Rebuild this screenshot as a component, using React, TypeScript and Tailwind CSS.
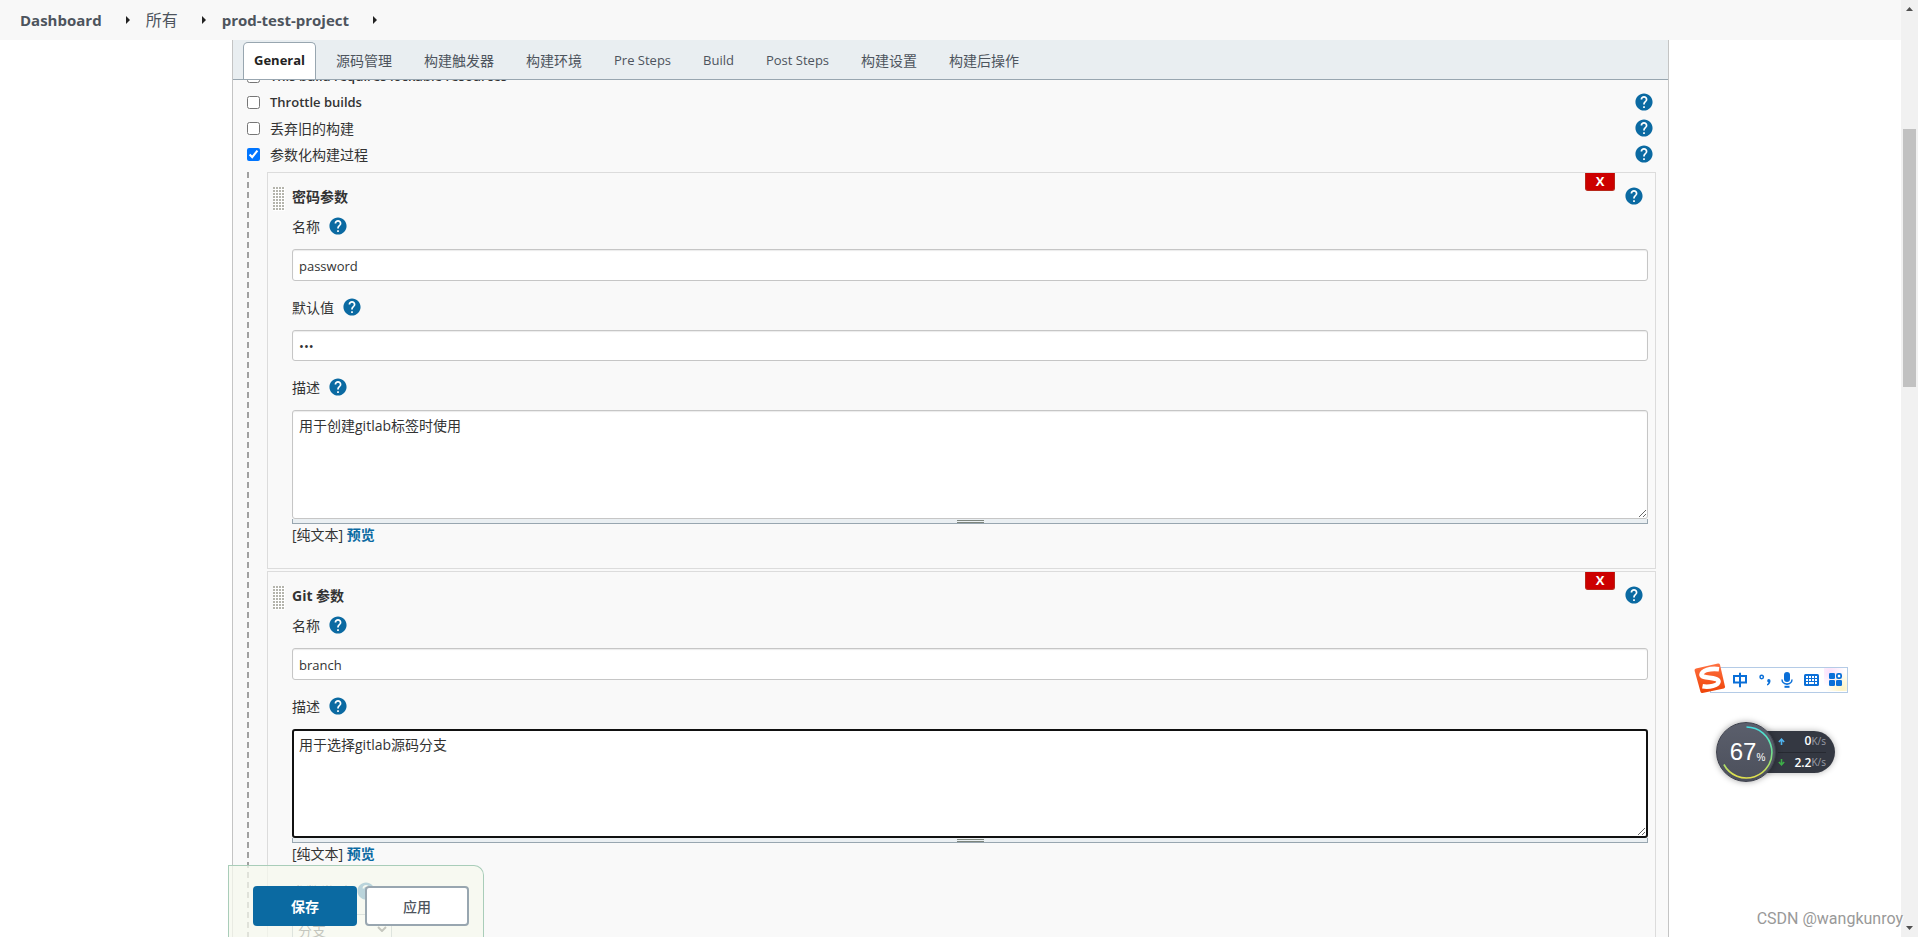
import { ReactNode, useId } from "react";

function Help() {
  return (
    <button type="button" aria-label="帮助" className="block size-[18px] shrink-0">
      <svg viewBox="1.500 1.500 21 21" className="block size-full" aria-hidden="true">
        <circle cx="12" cy="12" r="9" fill="#fff" />
        <path
          fill="#0b6aa2"
          d="M12 2C6.480 2 2 6.480 2 12s4.480 10 10 10 10-4.480 10-10S17.520 2 12 2zm1 17h-2v-2h2v2zm2.070-7.750l-.9.920C13.450 12.900 13 13.500 13 15h-2v-.5c0-1.100.45-2.100 1.170-2.830l1.240-1.260c.37-.36.59-.86.59-1.410 0-1.100-.9-2-2-2s-2 .9-2 2H8c0-2.210 1.790-4 4-4s4 1.790 4 4c0 .88-.36 1.680-.93 2.250z"
        />
      </svg>
    </button>
  );
}

function OptionRow({ label, checked = false, help = true }: { label: string; checked?: boolean; help?: boolean }) {
  const id = useId();
  return (
    <div className="flex h-[26px] items-center pr-[15px] pl-[14px]">
      <input id={id} type="checkbox" defaultChecked={checked} className="mr-[10px] size-[13px] accent-[#0075ff]" />
      <label htmlFor={id} className="flex-1 pt-px">
        {label}
      </label>
      {help && <Help />}
    </div>
  );
}

function Field({ label, children }: { label: string; children: (id: string) => ReactNode }) {
  const id = useId();
  return (
    <div className="mb-[14px]">
      <div className="mb-[11px] flex h-6 items-center gap-[9px]">
        <label htmlFor={id}>{label}</label>
        <Help />
      </div>
      {children(id)}
    </div>
  );
}

const inputClass =
  "block w-full rounded-[3px] border border-[#c6c6c6] bg-white px-[6px] text-[13px] shadow-[inset_0_1px_1px_rgba(0,0,0,0.08)] outline-none";

function TextField({ label, value }: { label: string; value: string }) {
  return (
    <Field label={label}>
      {(id) => <input id={id} type="text" defaultValue={value} className={`${inputClass} h-8 pt-[2px]`} />}
    </Field>
  );
}

function PasswordField({ label, value }: { label: string; value: string }) {
  return (
    <Field label={label}>
      {(id) => <input id={id} type="password" defaultValue={value} className={`${inputClass} h-[31px]`} />}
    </Field>
  );
}

function DescriptionField({ value, focused = false }: { value: string; focused?: boolean }) {
  return (
    <Field label="描述">
      {(id) => (
        <>
          <textarea
            id={id}
            defaultValue={value}
            className={
              focused
                ? "block h-[109px] w-full rounded-[3px] border-2 border-[#111] bg-white px-[5px] py-[4px] leading-5 outline-none"
                : "block h-[109px] w-full rounded-[3px] border border-[#c6c6c6] bg-white px-[6px] py-[5px] leading-5 shadow-[inset_0_1px_1px_rgba(0,0,0,0.08)] outline-none"
            }
          />
          <div className="flex h-[5px] flex-col items-center justify-between border border-t-0 border-[#98a6b0] bg-[#eaeff2] pt-px">
            <span className="h-px w-[27px] bg-[#7d857d]" />
            <span className="h-px w-[27px] bg-[#7d857d]" />
          </div>
          <div className="leading-[22px]">
            [纯文本]{" "}
            <a href="#preview" className="font-bold text-[#0b6aa2]">
              预览
            </a>
          </div>
        </>
      )}
    </Field>
  );
}

function ParameterCard({ title, children }: { title: string; children: ReactNode }) {
  return (
    <section className="relative border border-[#dcdcdc] pt-[11px] pr-[7px] pb-2 pl-6">
      <button
        type="button"
        aria-label="删除"
        className="absolute top-0 right-10 h-[18px] w-[30px] rounded-b-[3px] border border-t-0 border-[#b8281a] bg-[#c00] text-[13px] leading-[17px] font-bold text-white"
      >
        X
      </button>
      <span className="absolute top-[14px] left-[5px] h-6 w-3 bg-white bg-[conic-gradient(from_270deg_at_2px_2px,#b4b4ac_90deg,transparent_0)] bg-[size:3px_3px]" />
      <div className="mb-[6px] flex h-6 items-center justify-between pr-[5px]">
        <h2 className="font-bold">{title}</h2>
        <Help />
      </div>
      {children}
    </section>
  );
}

function CrumbArrow() {
  return (
    <svg viewBox="0 0 4 8" className="h-2 w-1" aria-hidden="true">
      <path d="M0 0 4 4 0 8Z" fill="#222" />
    </svg>
  );
}

const tabs = ["源码管理", "构建触发器", "构建环境", "Pre Steps", "Build", "Post Steps", "构建设置", "构建后操作"];

function TabBar() {
  return (
    <div className="flex h-10 shrink-0 items-end border-b border-[#98a6b0] bg-[#e9eef1] pl-[10px] text-[#4d545d]">
      <button
        type="button"
        className="h-[37px] rounded-t-[5px] border border-b-0 border-[#98a6b0] bg-white px-[10px] text-[13px] font-bold text-[#222]"
      >
        General
      </button>
      <div className="ml-5 flex gap-8">
        {tabs.map((tab) => (
          <button
            key={tab}
            type="button"
            className={/^[A-Z]/.test(tab) ? "h-[37px] text-[13px]" : "h-[37px] text-[14px]"}
          >
            {tab}
          </button>
        ))}
      </div>
    </div>
  );
}

function ActionBar() {
  return (
    <div className="absolute bottom-0 left-[228px] flex h-[72px] items-start gap-2 rounded-tr-[10px] border border-b-0 border-[#a9cdb9] bg-[#f6f8ed]/75 pt-5 pr-[14px] pl-6">
      <button type="button" className="h-10 w-[104px] rounded-[4px] bg-[#0b6aa2] font-bold text-white">
        保存
      </button>
      <button
        type="button"
        className="h-10 w-[104px] rounded-[4px] border-2 border-[#98a6b0] bg-white font-medium text-[#4d545d]"
      >
        应用
      </button>
    </div>
  );
}

function ImeToolbar() {
  return (
    <div className="absolute top-[664px] right-[70px] flex h-[31px] items-center">
      <svg viewBox="0 0 32 31" className="z-10 -mt-[3px] -mr-4 h-[31px] w-8" aria-hidden="true">
        <defs>
          <linearGradient id="ime" x1="0" y1="0" x2="0" y2="1">
            <stop offset="0" stopColor="#ff7040" />
            <stop offset="1" stopColor="#ee4408" />
          </linearGradient>
        </defs>
        <path
          d="M2 5.500 24 .5Q25.500.2 26 1.800L31 23.500Q31.300 25 29.800 25.500L8.500 30Q7 30.300 6.500 28.800L.6 7.800Q.2 6 2 5.500Z"
          fill="url(#ime)"
        />
        <path
          d="M25 6.200C16 5 8 7.500 7.500 11.500 7 16 24 13.500 24.500 18.500 24.800 22.500 15 24.500 8.500 23.300"
          fill="none"
          stroke="#fff"
          strokeWidth="4.600"
        />
      </svg>
      <div className="flex h-[26px] w-[138px] items-center justify-between border border-[#b4cbe6] bg-white pr-[5px] pl-[21px] text-[#0a6fd8]">
        <svg viewBox="0 0 16 16" className="size-4" aria-hidden="true">
          <path d="M2 4H14V10.500H2ZM8 .8V15.200" fill="none" stroke="currentColor" strokeWidth="2" />
        </svg>
        <svg viewBox="0 0 12 12" className="mt-px size-3" aria-hidden="true">
          <circle cx="2.700" cy="3" r="1.700" fill="none" stroke="currentColor" strokeWidth="1.500" />
          <path
            d="M10 5a1.900 1.900 0 0 1 1.500 2.200C11.300 9.500 10 11 8 11.500V10c.9-.4 1.300-.8 1.400-1.500A1.800 1.800 0 0 1 10 5Z"
            fill="currentColor"
          />
        </svg>
        <svg viewBox="0 0 12 16" className="h-4 w-3" aria-hidden="true">
          <rect x="3" y="0" width="6" height="10" rx="3" fill="currentColor" />
          <path d="M1 7.500a5 4.500 0 0 0 10 0M6 12v1" fill="none" stroke="currentColor" strokeWidth="1.500" />
          <rect x="3.500" y="13.800" width="5" height="2" fill="currentColor" />
        </svg>
        <svg viewBox="0 0 15 12" className="h-3 w-[15px]" aria-hidden="true">
          <rect width="15" height="12" rx="1.500" fill="currentColor" />
          <path
            d="M2 3h2m1 0h2m1 0h2m1 0h2M2 6h2m1 0h2m1 0h2m1 0h2M2 9h2m1 0h5m1 0h2"
            stroke="#fff"
            strokeWidth="1.800"
          />
        </svg>
        <span className="-m-[5px] bg-[radial-gradient(circle_at_25%_15%,#fbe0fa,transparent_60%),radial-gradient(circle_at_80%_90%,#fdf3c4,transparent_60%)] p-[5px]">
          <svg viewBox="0 0 13 13" className="size-[13px]" aria-hidden="true">
            <rect width="6" height="6" rx="1.300" fill="currentColor" />
            <rect y="7" width="6" height="6" rx="1.300" fill="currentColor" />
            <rect x="7" y="7" width="6" height="6" rx="1.300" fill="currentColor" />
            <rect x="7.900" y=".9" width="4.200" height="4.200" rx="1.300" fill="#fff" stroke="currentColor" strokeWidth="1.800" />
          </svg>
        </span>
      </div>
    </div>
  );
}

function SpeedRow({ up = false, value }: { up?: boolean; value: string }) {
  return (
    <div className="flex flex-1 items-center">
      <svg
        viewBox="0 0 8 8"
        className={up ? "size-[7px] text-[#4fb4f0]" : "size-[7px] rotate-180 text-[#3dae48]"}
        aria-hidden="true"
      >
        <path d="M4 8V1.500M1 4.500 4 1.300 7 4.500" fill="none" stroke="currentColor" strokeWidth="1.800" />
      </svg>
      <span className="flex-1 text-right text-[12px] font-semibold text-white">{value}</span>
      <span className="text-[10px] text-[#9a9ea8]">K/s</span>
    </div>
  );
}

function SpeedWidget() {
  return (
    <div className="absolute top-[722px] right-[83px] flex items-center">
      <div className="relative z-10 size-[60px] rounded-full border border-[#3e414c] bg-linear-to-b from-[#5b5f6c] to-[#4c505c] shadow-[0_0_6px_rgba(0,0,0,0.35)]">
        <svg viewBox="0 0 58 58" className="absolute inset-0 size-full" aria-hidden="true">
          <defs>
            <linearGradient id="arc" x1="0" y1="0" x2="0" y2="1">
              <stop offset="0" stopColor="#46e0e4" />
              <stop offset="0.5" stopColor="#6fe08c" />
              <stop offset="0.95" stopColor="#dfe04e" />
            </linearGradient>
          </defs>
          <path d="M29.500 4A25.500 25.500 0 1 1 6.900 41.500" fill="none" stroke="url(#arc)" strokeWidth="1.600" />
        </svg>
        <div className="flex h-full items-center justify-center pl-[3px] font-['Liberation_Sans',sans-serif] text-white">
          <span className="text-[24px]">67</span>
          <span className="mt-[10px] text-[10px]">%</span>
        </div>
      </div>
      <div className="-ml-5 flex h-[42px] w-[79px] flex-col divide-y divide-[#262931] rounded-r-full bg-[#343842] pr-[9px] pl-[22px] shadow-[0_0_6px_rgba(0,0,0,0.3)]">
        <SpeedRow up value="0" />
        <SpeedRow value="2.2" />
      </div>
    </div>
  );
}

function ScrollTrack() {
  return (
    <div className="flex w-[17px] shrink-0 flex-col items-center bg-[#f1f1f1] py-[7px]" aria-hidden="true">
      <svg viewBox="0 0 7 4" className="h-1 w-[7px]">
        <path d="M0 4 3.500 0 7 4Z" fill="#505050" />
      </svg>
      <div className="mt-[118px] h-[258px] w-[13px] bg-[#c1c1c1]" />
      <div className="flex-1" />
      <svg viewBox="0 0 7 4" className="h-1 w-[7px]">
        <path d="M0 0 3.500 4 7 0Z" fill="#505050" />
      </svg>
    </div>
  );
}

export default function App() {
  return (
    <div className="relative flex h-screen overflow-hidden bg-white font-['Open_Sans','Noto_Sans_CJK_SC',sans-serif] text-[14px] text-[#333]">
      <div className="flex min-w-0 flex-1 flex-col">
        <nav className="flex h-10 shrink-0 items-center bg-[#f8f8f8] px-5 text-[15px] font-bold text-[#4d545d]">
          <a href="#dashboard" className="mr-6">
            Dashboard
          </a>
          <CrumbArrow />
          <a href="#all" className="mr-6 ml-4 text-[16px] font-normal">
            所有
          </a>
          <CrumbArrow />
          <a href="#project" className="mr-6 ml-4">
            prod-test-project
          </a>
          <CrumbArrow />
        </nav>
        <main className="mx-[232px] flex min-h-0 flex-1 flex-col border-x border-[#c4c4c4] bg-[#f9f9f9]">
          <TabBar />
          <div className="min-h-0 flex-1 overflow-hidden">
            <form className="-mt-[17px]">
              <div className="text-[13px] font-semibold">
                <OptionRow label="This build requires lockable resources" help={false} />
                <OptionRow label="Throttle builds" />
              </div>
              <OptionRow label="丢弃旧的构建" />
              <OptionRow label="参数化构建过程" checked />
              <div className="mt-[5px] flex gap-[18px] pr-3 pl-[14px]">
                <div className="w-[2px] bg-[repeating-linear-gradient(to_bottom,#a0a0a0_0_6px,transparent_6px_10px)]" />
                <div className="flex min-w-0 flex-1 flex-col gap-[2px]">
                  <ParameterCard title="密码参数">
                    <TextField label="名称" value="password" />
                    <PasswordField label="默认值" value="abc" />
                    <DescriptionField value="用于创建gitlab标签时使用" />
                  </ParameterCard>
                  <ParameterCard title="Git 参数">
                    <TextField label="名称" value="branch" />
                    <DescriptionField value="用于选择gitlab源码分支" focused />
                    <Field label="参数类型">
                      {(id) => (
                        <div className="relative w-[100px]">
                          <select
                            id={id}
                            className="block h-8 w-full appearance-none rounded-[3px] border border-[#98a6b0] bg-white px-[5px]"
                          >
                            <option>分支</option>
                          </select>
                          <svg viewBox="0 0 10 6" className="absolute top-3 right-[5px] h-[6px] w-[10px]" aria-hidden="true">
                            <path d="M1 1 5 5 9 1" fill="none" stroke="#333" strokeWidth="2" />
                          </svg>
                        </div>
                      )}
                    </Field>
                  </ParameterCard>
                </div>
              </div>
            </form>
          </div>
        </main>
      </div>
      <ScrollTrack />
      <ActionBar />
      <ImeToolbar />
      <SpeedWidget />
      <div className="absolute right-[15px] bottom-1 font-['Roboto',sans-serif] text-[16px] leading-[28px] text-[#999] [text-shadow:1px_1px_0_#fff]">
        CSDN @wangkunroy
      </div>
    </div>
  );
}
